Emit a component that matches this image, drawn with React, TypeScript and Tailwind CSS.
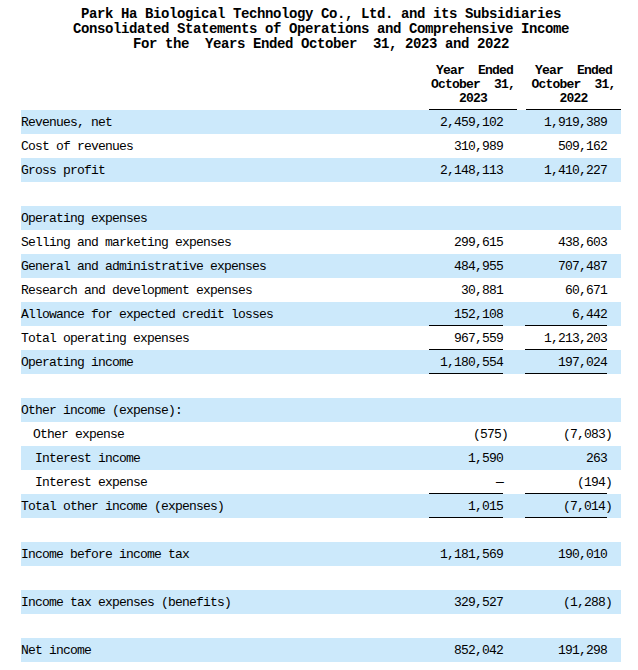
type Row = {
  label?: string;
  a?: string;
  b?: string;
  indent?: number;
  line?: boolean;
};

const rows: Row[] = [
  { label: 'Revenues, net', a: '2,459,102', b: '1,919,389' },
  { label: 'Cost of revenues', a: '310,989', b: '509,162' },
  { label: 'Gross profit', a: '2,148,113', b: '1,410,227' },
  {},
  { label: 'Operating expenses' },
  { label: 'Selling and marketing expenses', a: '299,615', b: '438,603' },
  { label: 'General and administrative expenses', a: '484,955', b: '707,487' },
  { label: 'Research and development expenses', a: '30,881', b: '60,671' },
  { label: 'Allowance for expected credit losses', a: '152,108', b: '6,442', line: true },
  { label: 'Total operating expenses', a: '967,559', b: '1,213,203', line: true },
  { label: 'Operating income', a: '1,180,554', b: '197,024', line: true },
  {},
  { label: 'Other income (expense):' },
  { label: 'Other expense', a: '(575)', b: '(7,083)', indent: 1 },
  { label: 'Interest income', a: '1,590', b: '263', indent: 2 },
  { label: 'Interest expense', a: '—', b: '(194)', indent: 2, line: true },
  { label: 'Total other income (expenses)', a: '1,015', b: '(7,014)', line: true },
  {},
  { label: 'Income before income tax', a: '1,181,569', b: '190,010' },
  {},
  { label: 'Income tax expenses (benefits)', a: '329,527', b: '(1,288)' },
  {},
  { label: 'Net income', a: '852,042', b: '191,298' },
];

function Value({ v, line, width }: { v?: string; line?: boolean; width: string }) {
  const neg = v?.startsWith('(');
  return (
    <div className={`${width} h-full pr-[14px]`}>
      <div className={`h-full pt-[2px] flex items-center justify-end ${line ? 'border-b border-black' : ''}`}>
        {v && <span className={neg ? 'mr-[-5px]' : ''}>{v}</span>}
      </div>
    </div>
  );
}

export default function App() {
  return (
    <div className="w-[638px] h-[670px] bg-white text-black font-['Liberation_Mono',monospace] overflow-hidden">
      {/* Title */}
      <div className="pt-[7px] pl-[4px] text-center font-bold text-[14px] leading-[15px] tracking-[-0.4px] whitespace-pre">
        <div>Park Ha Biological Technology Co., Ltd. and its Subsidiaries</div>
        <div>Consolidated Statements of Operations and Comprehensive Income</div>
        <div>For the  Years Ended October  31, 2023 and 2022</div>
      </div>

      {/* Column headers */}
      <div className="mt-[12px] ml-[429px] flex font-bold text-[13px] leading-[14px] tracking-[-0.8px] whitespace-pre">
        <div className="w-[88px] pb-[3px] text-center border-b border-black">
          <div className="pl-[3px]">Year  Ended</div>
          <div>October  31,</div>
          <div>2023</div>
        </div>
        <div className="w-[9px]" />
        <div className="w-[95px] pb-[3px] text-center border-b border-black">
          <div>Year  Ended</div>
          <div>October  31,</div>
          <div>2022</div>
        </div>
      </div>

      {/* Rows */}
      <div className="ml-[21px] w-[600px] text-[13px] tracking-[-0.8px] whitespace-pre">
        {rows.map((r, i) => (
          <div key={i} className={`h-[24px] flex items-stretch ${i % 2 === 0 ? 'bg-[#cce9fb]' : 'bg-white'}`}>
            <div
              className={`w-[408px] pt-[2px] flex items-center ${
                r.indent === 1 ? 'pl-[12px]' : r.indent === 2 ? 'pl-[14px]' : ''
              }`}
            >
              {r.label}
            </div>
            <Value v={r.a} line={r.line} width="w-[88px]" />
            <div className="w-[8px]" />
            <Value v={r.b} line={r.line} width="w-[96px]" />
          </div>
        ))}
      </div>
    </div>
  );
}
